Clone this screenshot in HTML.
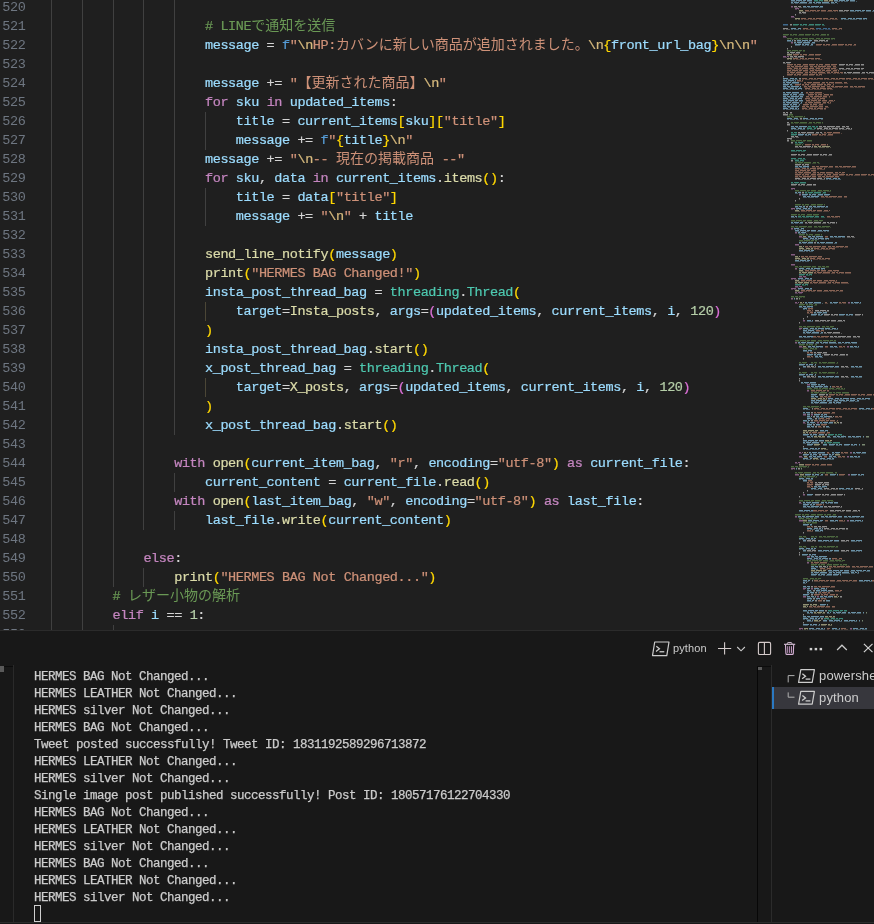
<!DOCTYPE html>
<html><head><meta charset="utf-8"><title>editor</title>
<style>
html,body{margin:0;padding:0}
body{width:874px;height:924px;overflow:hidden;background:#1f1f1f;position:relative;font-family:"Liberation Mono",monospace}
#ed{position:absolute;left:0;top:0;width:874px;height:630px;overflow:hidden;background:#1f1f1f}
.ln{position:absolute;left:0;width:25.4px;text-align:right;height:19px;line-height:19px;font-size:13.5px;letter-spacing:-0.4px;color:#6e7681;white-space:pre}
.cl{position:absolute;height:19px;line-height:19px;font-size:13.5px;letter-spacing:-0.4px;color:#d4d4d4;white-space:pre;-webkit-text-stroke:0.22px}
.ly{position:absolute;left:0;top:0;width:100%;height:100%;will-change:transform}
.g{position:absolute;width:1px;height:19px;background:#404040}.gw{background:#4b4636}
span.j{display:inline-block;vertical-align:baseline;font-family:"Liberation Mono","Noto Sans CJK JP",monospace;font-size:14px;letter-spacing:0;white-space:nowrap;overflow:visible;-webkit-text-stroke:0}
.v{color:#9cdcfe}.s{color:#ce9178}.e{color:#d7ba7d}.k{color:#c586c0}.b{color:#569cd6}.f{color:#dcdcaa}.t{color:#4ec9b0}.n{color:#b5cea8}.c{color:#6a9955}.p{color:#d4d4d4}.y{color:#ffd700}.m{color:#da70d6}.u{color:#179fff}
#pn{position:absolute;left:0;top:630px;width:874px;height:294px;background:#181818;overflow:hidden}
.tl{position:absolute;left:34px;height:17px;line-height:17px;font-size:12.5px;letter-spacing:-0.5px;color:#cccccc;white-space:pre;-webkit-text-stroke:0.25px}
.ui{font-family:"Liberation Sans",sans-serif;color:#cccccc;position:absolute;white-space:pre;will-change:transform}
</style></head><body>
<div id="ed">
<div class="ly">
<div class="ln" style="top:-2px">520</div>
<i class="g" style="left:51px;top:-2px"></i>
<i class="g" style="left:82px;top:-2px"></i>
<i class="g" style="left:113px;top:-2px"></i>
<i class="g" style="left:143px;top:-2px"></i>
<i class="g" style="left:174px;top:-2px"></i>
<div class="ln" style="top:17px">521</div>
<i class="g" style="left:51px;top:17px"></i>
<i class="g" style="left:82px;top:17px"></i>
<i class="g" style="left:113px;top:17px"></i>
<i class="g" style="left:143px;top:17px"></i>
<i class="g" style="left:174px;top:17px"></i>
<div class="cl" style="top:17px;left:205.00px"><span class="c"># LINE<span class="j" style="width:84px">で通知を送信</span></span></div>
<div class="ln" style="top:36px">522</div>
<i class="g" style="left:51px;top:36px"></i>
<i class="g" style="left:82px;top:36px"></i>
<i class="g" style="left:113px;top:36px"></i>
<i class="g" style="left:143px;top:36px"></i>
<i class="g" style="left:174px;top:36px"></i>
<div class="cl" style="top:36px;left:205.00px"><span class="v">message</span><span class="p"> = </span><span class="b">f</span><span class="s">"</span><span class="e">\n</span><span class="s">HP:<span class="j" style="width:252px">カバンに新しい商品が追加されました。</span></span><span class="e">\n</span><span class="y">{</span><span class="v">front_url_bag</span><span class="y">}</span><span class="e">\n\n</span><span class="s">"</span></div>
<div class="ln" style="top:55px">523</div>
<i class="g" style="left:51px;top:55px"></i>
<i class="g" style="left:82px;top:55px"></i>
<i class="g" style="left:113px;top:55px"></i>
<i class="g" style="left:143px;top:55px"></i>
<i class="g" style="left:174px;top:55px"></i>
<div class="ln" style="top:74px">524</div>
<i class="g" style="left:51px;top:74px"></i>
<i class="g" style="left:82px;top:74px"></i>
<i class="g" style="left:113px;top:74px"></i>
<i class="g" style="left:143px;top:74px"></i>
<i class="g" style="left:174px;top:74px"></i>
<div class="cl" style="top:74px;left:205.00px"><span class="v">message</span><span class="p"> += </span><span class="s">"<span class="j" style="width:126px">【更新された商品】</span></span><span class="e">\n</span><span class="s">"</span></div>
<div class="ln" style="top:93px">525</div>
<i class="g" style="left:51px;top:93px"></i>
<i class="g" style="left:82px;top:93px"></i>
<i class="g" style="left:113px;top:93px"></i>
<i class="g" style="left:143px;top:93px"></i>
<i class="g" style="left:174px;top:93px"></i>
<div class="cl" style="top:93px;left:205.00px"><span class="k">for</span><span class="p"> </span><span class="v">sku</span><span class="p"> </span><span class="k">in</span><span class="p"> </span><span class="v">updated_items</span><span class="p">:</span></div>
<div class="ln" style="top:112px">526</div>
<i class="g" style="left:51px;top:112px"></i>
<i class="g" style="left:82px;top:112px"></i>
<i class="g" style="left:113px;top:112px"></i>
<i class="g" style="left:143px;top:112px"></i>
<i class="g" style="left:174px;top:112px"></i>
<i class="g" style="left:205px;top:112px"></i>
<div class="cl" style="top:112px;left:235.80px"><span class="v">title</span><span class="p"> = </span><span class="v">current_items</span><span class="y">[</span><span class="v">sku</span><span class="y">][</span><span class="s">"title"</span><span class="y">]</span></div>
<div class="ln" style="top:131px">527</div>
<i class="g" style="left:51px;top:131px"></i>
<i class="g" style="left:82px;top:131px"></i>
<i class="g" style="left:113px;top:131px"></i>
<i class="g" style="left:143px;top:131px"></i>
<i class="g" style="left:174px;top:131px"></i>
<i class="g" style="left:205px;top:131px"></i>
<div class="cl" style="top:131px;left:235.80px"><span class="v">message</span><span class="p"> += </span><span class="b">f</span><span class="s">"</span><span class="y">{</span><span class="v">title</span><span class="y">}</span><span class="e">\n</span><span class="s">"</span></div>
<div class="ln" style="top:150px">528</div>
<i class="g" style="left:51px;top:150px"></i>
<i class="g" style="left:82px;top:150px"></i>
<i class="g" style="left:113px;top:150px"></i>
<i class="g" style="left:143px;top:150px"></i>
<i class="g" style="left:174px;top:150px"></i>
<div class="cl" style="top:150px;left:205.00px"><span class="v">message</span><span class="p"> += </span><span class="s">"</span><span class="e">\n</span><span class="s">-- <span class="j" style="width:98px">現在の掲載商品</span> --"</span></div>
<div class="ln" style="top:169px">529</div>
<i class="g" style="left:51px;top:169px"></i>
<i class="g" style="left:82px;top:169px"></i>
<i class="g" style="left:113px;top:169px"></i>
<i class="g" style="left:143px;top:169px"></i>
<i class="g" style="left:174px;top:169px"></i>
<div class="cl" style="top:169px;left:205.00px"><span class="k">for</span><span class="p"> </span><span class="v">sku</span><span class="p">, </span><span class="v">data</span><span class="p"> </span><span class="k">in</span><span class="p"> </span><span class="v">current_items</span><span class="p">.</span><span class="f">items</span><span class="y">()</span><span class="p">:</span></div>
<div class="ln" style="top:188px">530</div>
<i class="g" style="left:51px;top:188px"></i>
<i class="g" style="left:82px;top:188px"></i>
<i class="g" style="left:113px;top:188px"></i>
<i class="g" style="left:143px;top:188px"></i>
<i class="g" style="left:174px;top:188px"></i>
<i class="g" style="left:205px;top:188px"></i>
<div class="cl" style="top:188px;left:235.80px"><span class="v">title</span><span class="p"> = </span><span class="v">data</span><span class="y">[</span><span class="s">"title"</span><span class="y">]</span></div>
<div class="ln" style="top:207px">531</div>
<i class="g" style="left:51px;top:207px"></i>
<i class="g" style="left:82px;top:207px"></i>
<i class="g" style="left:113px;top:207px"></i>
<i class="g" style="left:143px;top:207px"></i>
<i class="g" style="left:174px;top:207px"></i>
<i class="g" style="left:205px;top:207px"></i>
<div class="cl" style="top:207px;left:235.80px"><span class="v">message</span><span class="p"> += </span><span class="s">"</span><span class="e">\n</span><span class="s">"</span><span class="p"> + </span><span class="v">title</span></div>
<div class="ln" style="top:226px">532</div>
<i class="g" style="left:51px;top:226px"></i>
<i class="g" style="left:82px;top:226px"></i>
<i class="g" style="left:113px;top:226px"></i>
<i class="g" style="left:143px;top:226px"></i>
<i class="g" style="left:174px;top:226px"></i>
<div class="ln" style="top:245px">533</div>
<i class="g" style="left:51px;top:245px"></i>
<i class="g" style="left:82px;top:245px"></i>
<i class="g" style="left:113px;top:245px"></i>
<i class="g" style="left:143px;top:245px"></i>
<i class="g" style="left:174px;top:245px"></i>
<div class="cl" style="top:245px;left:205.00px"><span class="f">send_line_notify</span><span class="y">(</span><span class="v">message</span><span class="y">)</span></div>
<div class="ln" style="top:264px">534</div>
<i class="g" style="left:51px;top:264px"></i>
<i class="g" style="left:82px;top:264px"></i>
<i class="g" style="left:113px;top:264px"></i>
<i class="g" style="left:143px;top:264px"></i>
<i class="g" style="left:174px;top:264px"></i>
<div class="cl" style="top:264px;left:205.00px"><span class="f">print</span><span class="y">(</span><span class="s">"HERMES BAG Changed!"</span><span class="y">)</span></div>
<div class="ln" style="top:283px">535</div>
<i class="g" style="left:51px;top:283px"></i>
<i class="g" style="left:82px;top:283px"></i>
<i class="g" style="left:113px;top:283px"></i>
<i class="g" style="left:143px;top:283px"></i>
<i class="g" style="left:174px;top:283px"></i>
<div class="cl" style="top:283px;left:205.00px"><span class="v">insta_post_thread_bag</span><span class="p"> = </span><span class="t">threading</span><span class="p">.</span><span class="t">Thread</span><span class="y">(</span></div>
<div class="ln" style="top:302px">536</div>
<i class="g" style="left:51px;top:302px"></i>
<i class="g" style="left:82px;top:302px"></i>
<i class="g" style="left:113px;top:302px"></i>
<i class="g" style="left:143px;top:302px"></i>
<i class="g" style="left:174px;top:302px"></i>
<i class="g gw" style="left:205px;top:302px"></i>
<div class="cl" style="top:302px;left:235.80px"><span class="v">target</span><span class="p">=</span><span class="f">Insta_posts</span><span class="p">, </span><span class="v">args</span><span class="p">=</span><span class="m">(</span><span class="v">updated_items</span><span class="p">, </span><span class="v">current_items</span><span class="p">, </span><span class="v">i</span><span class="p">, </span><span class="n">120</span><span class="m">)</span></div>
<div class="ln" style="top:321px">537</div>
<i class="g" style="left:51px;top:321px"></i>
<i class="g" style="left:82px;top:321px"></i>
<i class="g" style="left:113px;top:321px"></i>
<i class="g" style="left:143px;top:321px"></i>
<i class="g" style="left:174px;top:321px"></i>
<div class="cl" style="top:321px;left:205.00px"><span class="y">)</span></div>
<div class="ln" style="top:340px">538</div>
<i class="g" style="left:51px;top:340px"></i>
<i class="g" style="left:82px;top:340px"></i>
<i class="g" style="left:113px;top:340px"></i>
<i class="g" style="left:143px;top:340px"></i>
<i class="g" style="left:174px;top:340px"></i>
<div class="cl" style="top:340px;left:205.00px"><span class="v">insta_post_thread_bag</span><span class="p">.</span><span class="f">start</span><span class="y">()</span></div>
<div class="ln" style="top:359px">539</div>
<i class="g" style="left:51px;top:359px"></i>
<i class="g" style="left:82px;top:359px"></i>
<i class="g" style="left:113px;top:359px"></i>
<i class="g" style="left:143px;top:359px"></i>
<i class="g" style="left:174px;top:359px"></i>
<div class="cl" style="top:359px;left:205.00px"><span class="v">x_post_thread_bag</span><span class="p"> = </span><span class="t">threading</span><span class="p">.</span><span class="t">Thread</span><span class="y">(</span></div>
<div class="ln" style="top:378px">540</div>
<i class="g" style="left:51px;top:378px"></i>
<i class="g" style="left:82px;top:378px"></i>
<i class="g" style="left:113px;top:378px"></i>
<i class="g" style="left:143px;top:378px"></i>
<i class="g" style="left:174px;top:378px"></i>
<i class="g gw" style="left:205px;top:378px"></i>
<div class="cl" style="top:378px;left:235.80px"><span class="v">target</span><span class="p">=</span><span class="f">X_posts</span><span class="p">, </span><span class="v">args</span><span class="p">=</span><span class="m">(</span><span class="v">updated_items</span><span class="p">, </span><span class="v">current_items</span><span class="p">, </span><span class="v">i</span><span class="p">, </span><span class="n">120</span><span class="m">)</span></div>
<div class="ln" style="top:397px">541</div>
<i class="g" style="left:51px;top:397px"></i>
<i class="g" style="left:82px;top:397px"></i>
<i class="g" style="left:113px;top:397px"></i>
<i class="g" style="left:143px;top:397px"></i>
<i class="g" style="left:174px;top:397px"></i>
<div class="cl" style="top:397px;left:205.00px"><span class="y">)</span></div>
<div class="ln" style="top:416px">542</div>
<i class="g" style="left:51px;top:416px"></i>
<i class="g" style="left:82px;top:416px"></i>
<i class="g" style="left:113px;top:416px"></i>
<i class="g" style="left:143px;top:416px"></i>
<i class="g" style="left:174px;top:416px"></i>
<div class="cl" style="top:416px;left:205.00px"><span class="v">x_post_thread_bag</span><span class="p">.</span><span class="f">start</span><span class="y">()</span></div>
<div class="ln" style="top:435px">543</div>
<i class="g" style="left:51px;top:435px"></i>
<i class="g" style="left:82px;top:435px"></i>
<i class="g" style="left:113px;top:435px"></i>
<i class="g" style="left:143px;top:435px"></i>
<div class="ln" style="top:454px">544</div>
<i class="g" style="left:51px;top:454px"></i>
<i class="g" style="left:82px;top:454px"></i>
<i class="g" style="left:113px;top:454px"></i>
<i class="g" style="left:143px;top:454px"></i>
<div class="cl" style="top:454px;left:174.20px"><span class="k">with</span><span class="p"> </span><span class="f">open</span><span class="y">(</span><span class="v">current_item_bag</span><span class="p">, </span><span class="s">"r"</span><span class="p">, </span><span class="v">encoding</span><span class="p">=</span><span class="s">"utf-8"</span><span class="y">)</span><span class="p"> </span><span class="k">as</span><span class="p"> </span><span class="v">current_file</span><span class="p">:</span></div>
<div class="ln" style="top:473px">545</div>
<i class="g" style="left:51px;top:473px"></i>
<i class="g" style="left:82px;top:473px"></i>
<i class="g" style="left:113px;top:473px"></i>
<i class="g" style="left:143px;top:473px"></i>
<i class="g" style="left:174px;top:473px"></i>
<div class="cl" style="top:473px;left:205.00px"><span class="v">current_content</span><span class="p"> = </span><span class="v">current_file</span><span class="p">.</span><span class="f">read</span><span class="y">()</span></div>
<div class="ln" style="top:492px">546</div>
<i class="g" style="left:51px;top:492px"></i>
<i class="g" style="left:82px;top:492px"></i>
<i class="g" style="left:113px;top:492px"></i>
<i class="g" style="left:143px;top:492px"></i>
<div class="cl" style="top:492px;left:174.20px"><span class="k">with</span><span class="p"> </span><span class="f">open</span><span class="y">(</span><span class="v">last_item_bag</span><span class="p">, </span><span class="s">"w"</span><span class="p">, </span><span class="v">encoding</span><span class="p">=</span><span class="s">"utf-8"</span><span class="y">)</span><span class="p"> </span><span class="k">as</span><span class="p"> </span><span class="v">last_file</span><span class="p">:</span></div>
<div class="ln" style="top:511px">547</div>
<i class="g" style="left:51px;top:511px"></i>
<i class="g" style="left:82px;top:511px"></i>
<i class="g" style="left:113px;top:511px"></i>
<i class="g" style="left:143px;top:511px"></i>
<i class="g" style="left:174px;top:511px"></i>
<div class="cl" style="top:511px;left:205.00px"><span class="v">last_file</span><span class="p">.</span><span class="f">write</span><span class="y">(</span><span class="v">current_content</span><span class="y">)</span></div>
<div class="ln" style="top:530px">548</div>
<i class="g" style="left:51px;top:530px"></i>
<i class="g" style="left:82px;top:530px"></i>
<i class="g" style="left:113px;top:530px"></i>
<div class="ln" style="top:549px">549</div>
<i class="g" style="left:51px;top:549px"></i>
<i class="g" style="left:82px;top:549px"></i>
<i class="g" style="left:113px;top:549px"></i>
<div class="cl" style="top:549px;left:143.40px"><span class="k">else</span><span class="p">:</span></div>
<div class="ln" style="top:568px">550</div>
<i class="g" style="left:51px;top:568px"></i>
<i class="g" style="left:82px;top:568px"></i>
<i class="g" style="left:113px;top:568px"></i>
<i class="g" style="left:143px;top:568px"></i>
<div class="cl" style="top:568px;left:174.20px"><span class="f">print</span><span class="y">(</span><span class="s">"HERMES BAG Not Changed..."</span><span class="y">)</span></div>
<div class="ln" style="top:587px">551</div>
<i class="g" style="left:51px;top:587px"></i>
<i class="g" style="left:82px;top:587px"></i>
<div class="cl" style="top:587px;left:112.60px"><span class="c"># <span class="j" style="width:112px">レザー小物の解析</span></span></div>
<div class="ln" style="top:606px">552</div>
<i class="g" style="left:51px;top:606px"></i>
<i class="g" style="left:82px;top:606px"></i>
<div class="cl" style="top:606px;left:112.60px"><span class="k">elif</span><span class="p"> </span><span class="v">i</span><span class="p"> == </span><span class="n">1</span><span class="p">:</span></div>
<div class="ln" style="top:625px">553</div>
<i class="g" style="left:51px;top:625px"></i>
<i class="g" style="left:82px;top:625px"></i>
<i class="g" style="left:113px;top:625px"></i>
</div>
<svg style="position:absolute;left:0;top:0" width="874" height="630" viewBox="0 0 874 630" shape-rendering="crispEdges" fill="none" stroke-width="1"><path stroke="#406a8d" stroke-dasharray="2 1 5 1 7 2 3 1" d="M818 592.5h1"/><path stroke="#304456" stroke-dasharray="3 1 3 1 8 1 4 2" d="M818 593.5h1"/><path stroke="#406a8d" stroke-dasharray="6 1 2 1 4 2 5 1" d="M783 24.5h5"/><path stroke="#304456" stroke-dasharray="5 2 4 1 2 1 6 1" d="M783 25.5h5"/><path stroke="#406a8d" stroke-dasharray="5 2 4 1 2 1 6 1" d="M816 28.5h15M818 418.5h1"/><path stroke="#304456" stroke-dasharray="2 1 5 1 7 2 3 1" d="M816 29.5h15M818 419.5h1"/><path stroke="#4c683f" stroke-dasharray="4 1 6 1 3 1 5 2" d="M787 50.5h18M791 140.5h21M795 190.5h36M791 220.5h32M799 240.5h18M795 340.5h41M799 500.5h35M807 560.5h38"/><path stroke="#36442f" stroke-dasharray="6 1 2 1 4 2 5 1" d="M787 51.5h18M791 141.5h21M795 191.5h36M791 221.5h32M799 241.5h18M795 341.5h41M799 501.5h35M807 561.5h38"/><path stroke="#4c683f" stroke-dasharray="2 1 5 1 7 2 3 1" d="M791 122.5h32M795 162.5h25M799 362.5h8M811 362.5h6M819 362.5h19M799 372.5h8M811 372.5h6M819 372.5h19M811 392.5h38M795 472.5h42M803 522.5h14"/><path stroke="#36442f" stroke-dasharray="3 1 3 1 8 1 4 2" d="M791 123.5h32M795 163.5h25M799 363.5h8M811 363.5h6M819 363.5h19M799 373.5h8M811 373.5h6M819 373.5h19M811 393.5h38M795 473.5h42M803 523.5h14"/><path stroke="#4c683f" stroke-dasharray="6 1 2 1 4 2 5 1" d="M783 34.5h46M789 114.5h4M795 144.5h8M795 204.5h30M791 214.5h29M799 234.5h23M799 304.5h18M799 344.5h18M795 514.5h41M811 564.5h38"/><path stroke="#36442f" stroke-dasharray="5 2 4 1 2 1 6 1" d="M783 35.5h46M789 115.5h4M795 145.5h8M795 205.5h30M791 215.5h29M799 235.5h23M799 305.5h18M799 345.5h18M795 515.5h41M811 565.5h38"/><path stroke="#4c683f" stroke-dasharray="3 1 3 1 8 1 4 2" d="M787 116.5h18M791 226.5h40M795 266.5h34M791 296.5h14M799 326.5h35M803 406.5h18M791 466.5h18M799 476.5h18M799 536.5h8M811 536.5h6M819 536.5h19M799 546.5h8M811 546.5h6M819 546.5h19"/><path stroke="#36442f" stroke-dasharray="4 1 6 1 3 1 5 2" d="M787 117.5h18M791 227.5h40M795 267.5h34M791 297.5h14M799 327.5h35M803 407.5h18M791 467.5h18M799 477.5h18M799 537.5h8M811 537.5h6M819 537.5h19M799 547.5h8M811 547.5h6M819 547.5h19"/><path stroke="#4c683f" stroke-dasharray="5 2 4 1 2 1 6 1" d="M787 38.5h48M803 348.5h14M807 388.5h38M799 518.5h18M803 578.5h18"/><path stroke="#36442f" stroke-dasharray="2 1 5 1 7 2 3 1" d="M787 39.5h48M803 349.5h14M807 389.5h38M799 519.5h18M803 579.5h18"/><path stroke="#909072" stroke-dasharray="4 1 6 1 3 1 5 2" d="M824 0.5h9M799 10.5h5M795 210.5h5M799 270.5h5M795 280.5h5M795 290.5h5M803 430.5h16M825 440.5h7M803 520.5h4M811 570.5h16M814 620.5h7"/><path stroke="#585849" stroke-dasharray="6 1 2 1 4 2 5 1" d="M824 1.5h9M799 11.5h5M795 211.5h5M799 271.5h5M795 281.5h5M795 291.5h5M803 431.5h16M825 441.5h7M803 521.5h4M811 571.5h16M814 621.5h7"/><path stroke="#909072" stroke-dasharray="2 1 5 1 7 2 3 1" d="M799 272.5h14M795 282.5h14M800 302.5h4M834 422.5h5M803 432.5h5M804 452.5h4M814 612.5h11"/><path stroke="#585849" stroke-dasharray="3 1 3 1 8 1 4 2" d="M799 273.5h14M795 283.5h14M800 303.5h4M834 423.5h5M803 433.5h5M804 453.5h4M814 613.5h11"/><path stroke="#909072" stroke-dasharray="6 1 2 1 4 2 5 1" d="M787 54.5h5M814 444.5h7M835 454.5h5M799 464.5h5M800 474.5h4M803 604.5h16M821 624.5h11"/><path stroke="#585849" stroke-dasharray="5 2 4 1 2 1 6 1" d="M787 55.5h5M814 445.5h7M835 455.5h5M799 465.5h5M800 475.5h4M803 605.5h16M821 625.5h11"/><path stroke="#909072" stroke-dasharray="3 1 3 1 8 1 4 2" d="M814 146.5h17M803 236.5h4M799 246.5h5M795 256.5h5M803 346.5h4M814 436.5h11M804 456.5h4M834 596.5h5M803 606.5h5M825 616.5h10"/><path stroke="#585849" stroke-dasharray="4 1 6 1 3 1 5 2" d="M814 147.5h17M803 237.5h4M799 247.5h5M795 257.5h5M803 347.5h4M814 437.5h11M804 457.5h4M834 597.5h5M803 607.5h5M825 617.5h10"/><path stroke="#909072" stroke-dasharray="5 2 4 1 2 1 6 1" d="M795 18.5h5M787 58.5h5M799 248.5h14M795 258.5h14M811 398.5h16M821 448.5h7M813 458.5h6M804 628.5h4"/><path stroke="#585849" stroke-dasharray="2 1 5 1 7 2 3 1" d="M795 19.5h5M787 59.5h5M799 249.5h14M795 259.5h14M811 399.5h16M821 449.5h7M813 459.5h6M804 629.5h4"/><path stroke="#835d80" stroke-dasharray="4 1 6 1 3 1 5 2" d="M803 320.5h2M807 390.5h2M799 520.5h4M847 520.5h2"/><path stroke="#513e4f" stroke-dasharray="6 1 2 1 4 2 5 1" d="M803 321.5h2M807 391.5h2M799 521.5h4M847 521.5h2"/><path stroke="#835d80" stroke-dasharray="2 1 5 1 7 2 3 1" d="M791 42.5h2M795 232.5h2M795 292.5h8M795 302.5h4M848 302.5h2M795 342.5h2M803 422.5h3M817 422.5h2M799 452.5h4M850 452.5h2M795 462.5h5M799 502.5h3M807 562.5h2"/><path stroke="#513e4f" stroke-dasharray="3 1 3 1 8 1 4 2" d="M791 43.5h2M795 233.5h2M795 293.5h8M795 303.5h4M848 303.5h2M795 343.5h2M803 423.5h3M817 423.5h2M799 453.5h4M850 453.5h2M795 463.5h5M799 503.5h3M807 563.5h2"/><path stroke="#835d80" stroke-dasharray="6 1 2 1 4 2 5 1" d="M799 194.5h2M795 244.5h4M791 254.5h4M791 264.5h4M807 384.5h3M803 414.5h3M811 414.5h2M795 474.5h4M848 474.5h2M803 494.5h2"/><path stroke="#513e4f" stroke-dasharray="5 2 4 1 2 1 6 1" d="M799 195.5h2M795 245.5h4M791 255.5h4M791 265.5h4M807 385.5h3M803 415.5h3M811 415.5h2M795 475.5h4M848 475.5h2M803 495.5h2"/><path stroke="#835d80" stroke-dasharray="3 1 3 1 8 1 4 2" d="M791 6.5h2M791 16.5h4M783 36.5h4M783 56.5h6M799 236.5h4M799 276.5h8M795 286.5h8M799 346.5h4M847 346.5h2M799 456.5h4M847 456.5h2M795 516.5h2M807 556.5h3M803 596.5h3M817 596.5h2"/><path stroke="#513e4f" stroke-dasharray="4 1 6 1 3 1 5 2" d="M791 7.5h2M791 17.5h4M783 37.5h4M783 57.5h6M799 237.5h4M799 277.5h8M795 287.5h8M799 347.5h4M847 347.5h2M799 457.5h4M847 457.5h2M795 517.5h2M807 557.5h3M803 597.5h3M817 597.5h2"/><path stroke="#835d80" stroke-dasharray="5 2 4 1 2 1 6 1" d="M795 8.5h4M791 188.5h4M791 208.5h4M791 228.5h2M795 268.5h2M791 278.5h6M791 288.5h6M791 298.5h2M799 328.5h3M791 468.5h4M803 588.5h3M811 588.5h2M799 628.5h4M850 628.5h2"/><path stroke="#513e4f" stroke-dasharray="2 1 5 1 7 2 3 1" d="M795 9.5h4M791 189.5h4M791 209.5h4M791 229.5h2M795 269.5h2M791 279.5h6M791 289.5h6M791 299.5h2M799 329.5h3M791 469.5h4M803 589.5h3M811 589.5h2M799 629.5h4M850 629.5h2"/><path stroke="#798871" stroke-dasharray="4 1 6 1 3 1 5 2" d="M862 620.5h1"/><path stroke="#4c5448" stroke-dasharray="6 1 2 1 4 2 5 1" d="M862 621.5h1"/><path stroke="#798871" stroke-dasharray="2 1 5 1 7 2 3 1" d="M866 612.5h1"/><path stroke="#4c5448" stroke-dasharray="3 1 3 1 8 1 4 2" d="M866 613.5h1"/><path stroke="#798871" stroke-dasharray="6 1 2 1 4 2 5 1" d="M862 444.5h3"/><path stroke="#4c5448" stroke-dasharray="5 2 4 1 2 1 6 1" d="M862 445.5h3"/><path stroke="#798871" stroke-dasharray="3 1 3 1 8 1 4 2" d="M866 436.5h3"/><path stroke="#4c5448" stroke-dasharray="4 1 6 1 3 1 5 2" d="M866 437.5h3"/><path stroke="#798871" stroke-dasharray="5 2 4 1 2 1 6 1" d="M799 298.5h1M801 468.5h1"/><path stroke="#4c5448" stroke-dasharray="2 1 5 1 7 2 3 1" d="M799 299.5h1M801 469.5h1"/><path stroke="#886354" stroke-dasharray="4 1 6 1 3 1 5 2" d="M805 10.5h33M787 70.5h52M797 80.5h6M806 100.5h29M795 170.5h22M801 210.5h29M805 270.5h34M801 280.5h36M801 290.5h42M807 310.5h6M816 330.5h8M811 390.5h18M814 420.5h24M808 480.5h5M813 510.5h16M825 520.5h3M839 520.5h6M807 530.5h6M814 580.5h43M872 580.5h2M835 590.5h7M818 600.5h4"/><path stroke="#54413a" stroke-dasharray="6 1 2 1 4 2 5 1" d="M805 11.5h33M787 71.5h52M797 81.5h6M806 101.5h29M795 171.5h22M801 211.5h29M805 271.5h34M801 281.5h36M801 291.5h42M807 311.5h6M816 331.5h8M811 391.5h18M814 421.5h24M808 481.5h5M813 511.5h16M825 521.5h3M839 521.5h6M807 531.5h6M814 581.5h43M872 581.5h2M835 591.5h7M818 601.5h4"/><path stroke="#886354" stroke-dasharray="2 1 5 1 7 2 3 1" d="M787 72.5h56M804 82.5h44M806 92.5h18M805 102.5h26M824 132.5h18M795 172.5h50M814 272.5h37M810 282.5h39M825 302.5h3M839 302.5h7M807 312.5h6M807 352.5h6M814 412.5h21M809 432.5h21M827 452.5h3M841 452.5h7M807 482.5h6M811 562.5h18M819 592.5h11"/><path stroke="#54413a" stroke-dasharray="3 1 3 1 8 1 4 2" d="M787 73.5h56M804 83.5h44M806 93.5h18M805 103.5h26M824 133.5h18M795 173.5h50M814 273.5h37M810 283.5h39M825 303.5h3M839 303.5h7M807 313.5h6M807 353.5h6M814 413.5h21M809 433.5h21M827 453.5h3M841 453.5h7M807 483.5h6M811 563.5h18M819 593.5h11"/><path stroke="#886354" stroke-dasharray="6 1 2 1 4 2 5 1" d="M816 44.5h40M793 54.5h29M787 64.5h51M787 74.5h35M795 84.5h39M808 94.5h25M803 104.5h20M812 134.5h22M805 144.5h23M795 174.5h79M829 394.5h45M821 424.5h6M805 464.5h27M825 474.5h3M839 474.5h7M807 484.5h6M816 504.5h8M814 594.5h24"/><path stroke="#54413a" stroke-dasharray="5 2 4 1 2 1 6 1" d="M816 45.5h40M793 55.5h29M787 65.5h51M787 75.5h35M795 85.5h39M808 95.5h25M803 105.5h20M812 135.5h22M805 145.5h23M795 175.5h79M829 395.5h45M821 425.5h6M805 465.5h27M825 475.5h3M839 475.5h7M807 485.5h6M816 505.5h8M814 595.5h24"/><path stroke="#886354" stroke-dasharray="3 1 3 1 8 1 4 2" d="M787 66.5h50M804 86.5h61M806 96.5h24M802 106.5h27M812 166.5h44M795 176.5h45M821 196.5h26M827 216.5h13M825 236.5h3M805 246.5h43M801 256.5h22M813 336.5h16M825 346.5h3M839 346.5h6M807 356.5h6M832 386.5h10M820 396.5h11M835 416.5h7M818 426.5h4M824 456.5h3M838 456.5h7M807 486.5h6M807 526.5h6M829 566.5h45M814 586.5h21M809 606.5h26"/><path stroke="#54413a" stroke-dasharray="4 1 6 1 3 1 5 2" d="M787 67.5h50M804 87.5h61M806 97.5h24M802 107.5h27M812 167.5h44M795 177.5h45M821 197.5h26M827 217.5h13M825 237.5h3M805 247.5h43M801 257.5h22M813 337.5h16M825 347.5h3M839 347.5h6M807 357.5h6M832 387.5h10M820 397.5h11M835 417.5h7M818 427.5h4M824 457.5h3M838 457.5h7M807 487.5h6M807 527.5h6M829 567.5h45M814 587.5h21M809 607.5h26"/><path stroke="#886354" stroke-dasharray="5 2 4 1 2 1 6 1" d="M801 18.5h37M803 28.5h12M832 28.5h10M793 58.5h29M787 68.5h51M802 78.5h72M805 88.5h28M805 98.5h20M802 108.5h24M795 168.5h30M814 248.5h21M810 258.5h20M808 308.5h5M814 408.5h43M872 408.5h2M819 418.5h11M832 558.5h10M820 568.5h11M821 598.5h6M827 628.5h3M841 628.5h7"/><path stroke="#54413a" stroke-dasharray="2 1 5 1 7 2 3 1" d="M801 19.5h37M803 29.5h12M832 29.5h10M793 59.5h29M787 69.5h51M802 79.5h72M805 89.5h28M805 99.5h20M802 109.5h24M795 169.5h30M814 249.5h21M810 259.5h20M808 309.5h5M814 409.5h43M872 409.5h2M819 419.5h11M832 559.5h10M820 569.5h11M821 599.5h6M827 629.5h3M841 629.5h7"/><path stroke="#3b8576" stroke-dasharray="4 1 6 1 3 1 5 2" d="M814 0.5h9M791 150.5h15M795 160.5h9M828 610.5h19"/><path stroke="#2d524a" stroke-dasharray="6 1 2 1 4 2 5 1" d="M814 1.5h9M791 151.5h15M795 161.5h9M828 611.5h19"/><path stroke="#3b8576" stroke-dasharray="2 1 5 1 7 2 3 1" d="M791 132.5h6M795 142.5h9M791 182.5h15M805 192.5h22M824 442.5h16"/><path stroke="#2d524a" stroke-dasharray="3 1 3 1 8 1 4 2" d="M791 133.5h6M795 143.5h9M791 183.5h15M805 193.5h22M824 443.5h16"/><path stroke="#3b8576" stroke-dasharray="6 1 2 1 4 2 5 1" d="M793 24.5h32M791 134.5h6M799 274.5h13M795 284.5h13M828 434.5h16"/><path stroke="#2d524a" stroke-dasharray="5 2 4 1 2 1 6 1" d="M793 25.5h32M791 135.5h6M799 275.5h13M795 285.5h13M828 435.5h16"/><path stroke="#3b8576" stroke-dasharray="3 1 3 1 8 1 4 2" d="M808 126.5h10M798 216.5h27"/><path stroke="#2d524a" stroke-dasharray="4 1 6 1 3 1 5 2" d="M808 127.5h10M798 217.5h27"/><path stroke="#3b8576" stroke-dasharray="5 2 4 1 2 1 6 1" d="M807 128.5h9M791 158.5h15M824 618.5h19"/><path stroke="#2d524a" stroke-dasharray="2 1 5 1 7 2 3 1" d="M807 129.5h9M791 159.5h15M824 619.5h19"/><path stroke="#6a90a5" stroke-dasharray="4 1 6 1 3 1 5 2" d="M791 0.5h22M834 0.5h23M850 10.5h24M787 40.5h6M797 40.5h16M783 80.5h13M783 100.5h20M795 230.5h34M799 250.5h16M795 260.5h17M807 320.5h6M803 330.5h12M803 350.5h9M811 400.5h48M803 420.5h7M820 430.5h8M803 440.5h21M803 480.5h4M799 510.5h14M808 520.5h15M830 520.5h8M850 520.5h13M815 530.5h8M803 540.5h3M818 540.5h22M851 540.5h11M803 550.5h3M818 550.5h22M851 550.5h11M828 570.5h42M803 580.5h7M859 580.5h13M807 590.5h5M816 590.5h13M807 600.5h7M826 600.5h4M803 610.5h21M807 620.5h6M823 620.5h4M829 620.5h13M844 620.5h13M859 620.5h1"/><path stroke="#445862" stroke-dasharray="6 1 2 1 4 2 5 1" d="M791 1.5h22M834 1.5h23M850 11.5h24M787 41.5h6M797 41.5h16M783 81.5h13M783 101.5h20M795 231.5h34M799 251.5h16M795 261.5h17M807 321.5h6M803 331.5h12M803 351.5h9M811 401.5h48M803 421.5h7M820 431.5h8M803 441.5h21M803 481.5h4M799 511.5h14M808 521.5h15M830 521.5h8M850 521.5h13M815 531.5h8M803 541.5h3M818 541.5h22M851 541.5h11M803 551.5h3M818 551.5h22M851 551.5h11M828 571.5h42M803 581.5h7M859 581.5h13M807 591.5h5M816 591.5h13M807 601.5h7M826 601.5h4M803 611.5h21M807 621.5h6M823 621.5h4M829 621.5h13M844 621.5h13M859 621.5h1"/><path stroke="#6a90a5" stroke-dasharray="2 1 5 1 7 2 3 1" d="M791 2.5h47M794 42.5h21M783 82.5h18M783 92.5h20M783 102.5h19M795 192.5h6M791 222.5h12M798 232.5h9M799 242.5h14M817 242.5h20M805 302.5h18M830 302.5h8M851 302.5h10M814 312.5h13M803 332.5h20M798 342.5h59M801 382.5h15M811 402.5h30M803 412.5h7M807 422.5h9M820 422.5h13M803 442.5h17M809 452.5h16M832 452.5h8M853 452.5h13M803 502.5h35M811 572.5h48M803 582.5h4M807 592.5h7M807 612.5h6M827 612.5h4M833 612.5h13M848 612.5h13M863 612.5h1"/><path stroke="#445862" stroke-dasharray="3 1 3 1 8 1 4 2" d="M791 3.5h47M794 43.5h21M783 83.5h18M783 93.5h20M783 103.5h19M795 193.5h6M791 223.5h12M798 233.5h9M799 243.5h14M817 243.5h20M805 303.5h18M830 303.5h8M851 303.5h10M814 313.5h13M803 333.5h20M798 343.5h59M801 383.5h15M811 403.5h30M803 413.5h7M807 423.5h9M820 423.5h13M803 443.5h17M809 453.5h16M832 453.5h8M853 453.5h13M803 503.5h35M811 573.5h48M803 583.5h4M807 593.5h7M807 613.5h6M827 613.5h4M833 613.5h13M848 613.5h13M863 613.5h1"/><path stroke="#6a90a5" stroke-dasharray="6 1 2 1 4 2 5 1" d="M795 44.5h18M783 84.5h10M783 94.5h22M783 104.5h17M798 134.5h13M802 194.5h28M811 314.5h12M839 314.5h14M807 354.5h16M799 364.5h17M799 374.5h17M811 384.5h16M811 394.5h7M807 414.5h3M814 414.5h13M807 424.5h5M816 424.5h4M803 434.5h21M807 444.5h6M823 444.5h4M829 444.5h13M844 444.5h13M859 444.5h1M803 454.5h15M822 454.5h12M805 474.5h18M830 474.5h8M851 474.5h13M807 494.5h6M803 504.5h12M803 524.5h9M802 554.5h14M811 574.5h30M803 594.5h7M820 604.5h8M803 624.5h17"/><path stroke="#445862" stroke-dasharray="5 2 4 1 2 1 6 1" d="M795 45.5h18M783 85.5h10M783 95.5h22M783 105.5h17M798 135.5h13M802 195.5h28M811 315.5h12M839 315.5h14M807 355.5h16M799 365.5h17M799 375.5h17M811 385.5h16M811 395.5h7M807 415.5h3M814 415.5h13M807 425.5h5M816 425.5h4M803 435.5h21M807 445.5h6M823 445.5h4M829 445.5h13M844 445.5h13M859 445.5h1M803 455.5h15M822 455.5h12M805 475.5h18M830 475.5h8M851 475.5h13M807 495.5h6M803 505.5h12M803 525.5h9M802 555.5h14M811 575.5h30M803 595.5h7M820 605.5h8M803 625.5h17"/><path stroke="#6a90a5" stroke-dasharray="3 1 3 1 8 1 4 2" d="M803 6.5h20M783 86.5h18M783 96.5h20M783 106.5h16M791 126.5h17M795 166.5h14M803 196.5h16M795 206.5h10M809 206.5h19M791 216.5h6M808 236.5h15M830 236.5h15M799 306.5h14M799 336.5h14M808 346.5h15M830 346.5h8M850 346.5h9M815 356.5h8M803 366.5h3M818 366.5h22M851 366.5h11M803 376.5h3M818 376.5h22M851 376.5h11M807 386.5h24M811 396.5h7M807 416.5h5M816 416.5h13M807 426.5h7M826 426.5h4M807 436.5h6M827 436.5h4M833 436.5h13M848 436.5h13M863 436.5h1M809 456.5h13M829 456.5h8M850 456.5h10M814 486.5h13M803 506.5h20M798 516.5h66M811 556.5h16M811 566.5h7M803 586.5h7M807 596.5h9M820 596.5h13M803 616.5h21"/><path stroke="#445862" stroke-dasharray="4 1 6 1 3 1 5 2" d="M803 7.5h20M783 87.5h18M783 97.5h20M783 107.5h16M791 127.5h17M795 167.5h14M803 197.5h16M795 207.5h10M809 207.5h19M791 217.5h6M808 237.5h15M830 237.5h15M799 307.5h14M799 337.5h14M808 347.5h15M830 347.5h8M850 347.5h9M815 357.5h8M803 367.5h3M818 367.5h22M851 367.5h11M803 377.5h3M818 377.5h22M851 377.5h11M807 387.5h24M811 397.5h7M807 417.5h5M816 417.5h13M807 427.5h7M826 427.5h4M807 437.5h6M827 437.5h4M833 437.5h13M848 437.5h13M863 437.5h1M809 457.5h13M829 457.5h8M850 457.5h10M814 487.5h13M803 507.5h20M798 517.5h66M811 557.5h16M811 567.5h7M803 587.5h7M807 597.5h9M820 597.5h13M803 617.5h21"/><path stroke="#6a90a5" stroke-dasharray="5 2 4 1 2 1 6 1" d="M841 18.5h26M791 28.5h10M783 78.5h15M783 88.5h19M783 98.5h19M783 108.5h16M787 118.5h12M803 118.5h20M791 128.5h14M826 178.5h15M796 208.5h16M794 228.5h10M803 238.5h26M799 268.5h26M798 278.5h14M798 288.5h14M794 298.5h1M803 308.5h4M803 328.5h35M828 398.5h42M803 408.5h7M859 408.5h13M807 418.5h7M803 448.5h17M803 458.5h9M820 458.5h14M796 468.5h1M799 478.5h14M811 488.5h12M839 488.5h14M807 528.5h16M799 538.5h17M799 548.5h17M807 558.5h24M811 568.5h7M807 588.5h3M814 588.5h13M807 598.5h5M816 598.5h4M803 618.5h17M809 628.5h16M832 628.5h8M853 628.5h14"/><path stroke="#445862" stroke-dasharray="2 1 5 1 7 2 3 1" d="M841 19.5h26M791 29.5h10M783 79.5h15M783 89.5h19M783 99.5h19M783 109.5h16M787 119.5h12M803 119.5h20M791 129.5h14M826 179.5h15M796 209.5h16M794 229.5h10M803 239.5h26M799 269.5h26M798 279.5h14M798 289.5h14M794 299.5h1M803 309.5h4M803 329.5h35M828 399.5h42M803 409.5h7M859 409.5h13M807 419.5h7M803 449.5h17M803 459.5h9M820 459.5h14M796 469.5h1M799 479.5h14M811 489.5h12M839 489.5h14M807 529.5h16M799 539.5h17M799 549.5h17M807 559.5h24M811 569.5h7M807 589.5h3M814 589.5h13M807 599.5h5M816 599.5h4M803 619.5h17M809 629.5h16M832 629.5h8M853 629.5h14"/><path stroke="#8c8c8c" stroke-dasharray="4 1 6 1 3 1 5 2" d="M839 10.5h10M794 40.5h2M814 40.5h14M787 130.5h1M787 140.5h2M791 160.5h2M795 200.5h1M815 310.5h14M815 320.5h30M799 380.5h1M811 420.5h2M807 490.5h1M830 510.5h30M807 540.5h9M841 540.5h8M807 550.5h9M841 550.5h8M812 580.5h1M813 590.5h2M829 590.5h5M815 600.5h2M823 600.5h2M825 610.5h2"/><path stroke="#555555" stroke-dasharray="6 1 2 1 4 2 5 1" d="M839 11.5h10M794 41.5h2M814 41.5h14M787 131.5h1M787 141.5h2M791 161.5h2M795 201.5h1M815 311.5h14M815 321.5h30M799 381.5h1M811 421.5h2M807 491.5h1M830 511.5h30M807 541.5h9M841 541.5h8M807 551.5h9M841 551.5h8M812 581.5h1M813 591.5h2M829 591.5h5M815 601.5h2M823 601.5h2M825 611.5h2"/><path stroke="#8c8c8c" stroke-dasharray="2 1 5 1 7 2 3 1" d="M799 12.5h7M787 52.5h13M783 62.5h8M844 72.5h30M783 112.5h5M790 112.5h2M787 122.5h3M798 132.5h25M791 142.5h2M802 192.5h2M805 222.5h32M814 242.5h2M799 322.5h1M824 332.5h18M814 352.5h13M811 412.5h2M840 422.5h2M821 442.5h2M815 482.5h14M803 492.5h1M803 532.5h1M799 542.5h1M799 552.5h1M815 592.5h2M803 622.5h1"/><path stroke="#555555" stroke-dasharray="3 1 3 1 8 1 4 2" d="M799 13.5h7M787 53.5h13M783 63.5h8M844 73.5h30M783 113.5h5M790 113.5h2M787 123.5h3M798 133.5h25M791 143.5h2M802 193.5h2M805 223.5h32M814 243.5h2M799 323.5h1M824 333.5h18M814 353.5h13M811 413.5h2M840 423.5h2M821 443.5h2M815 483.5h14M803 493.5h1M803 533.5h1M799 543.5h1M799 553.5h1M815 593.5h2M803 623.5h1"/><path stroke="#8c8c8c" stroke-dasharray="6 1 2 1 4 2 5 1" d="M795 14.5h1M790 24.5h2M839 64.5h25M783 114.5h5M787 124.5h3M791 154.5h41M795 164.5h14M791 184.5h25M824 314.5h14M855 314.5h8M824 354.5h24M819 394.5h9M813 424.5h2M825 434.5h2M819 454.5h2M815 484.5h14M815 494.5h30M799 554.5h1M811 594.5h2M803 614.5h1"/><path stroke="#555555" stroke-dasharray="5 2 4 1 2 1 6 1" d="M795 15.5h1M790 25.5h2M839 65.5h25M783 115.5h5M787 125.5h3M791 155.5h41M795 165.5h14M791 185.5h25M824 315.5h14M855 315.5h8M824 355.5h24M819 395.5h9M813 425.5h2M825 435.5h2M819 455.5h2M815 485.5h14M815 495.5h30M799 555.5h1M811 595.5h2M803 615.5h1"/><path stroke="#8c8c8c" stroke-dasharray="3 1 3 1 8 1 4 2" d="M794 6.5h8M791 46.5h1M790 56.5h14M783 76.5h1M819 126.5h30M791 136.5h8M795 146.5h18M806 206.5h2M847 236.5h8M807 316.5h1M830 336.5h30M807 366.5h9M841 366.5h8M807 376.5h9M841 376.5h8M813 416.5h2M829 416.5h5M815 426.5h2M823 426.5h2M803 446.5h1M799 496.5h1M824 506.5h18M814 526.5h13M819 566.5h9M811 586.5h2M840 596.5h2"/><path stroke="#555555" stroke-dasharray="4 1 6 1 3 1 5 2" d="M794 7.5h8M791 47.5h1M790 57.5h14M783 77.5h1M819 127.5h30M791 137.5h8M795 147.5h18M806 207.5h2M847 237.5h8M807 317.5h1M830 337.5h30M807 367.5h9M841 367.5h8M807 377.5h9M841 377.5h8M813 417.5h2M829 417.5h5M815 427.5h2M823 427.5h2M803 447.5h1M799 497.5h1M824 507.5h18M814 527.5h13M819 567.5h9M811 587.5h2M840 597.5h2"/><path stroke="#8c8c8c" stroke-dasharray="5 2 4 1 2 1 6 1" d="M783 28.5h7M787 48.5h1M839 68.5h25M799 78.5h2M800 118.5h2M817 128.5h35M787 138.5h5M795 178.5h30M799 198.5h1M796 298.5h2M803 318.5h1M803 358.5h1M799 368.5h1M799 378.5h1M812 408.5h1M815 418.5h2M803 438.5h1M798 468.5h2M824 488.5h14M855 488.5h8M824 528.5h24M813 598.5h2M821 618.5h2"/><path stroke="#555555" stroke-dasharray="2 1 5 1 7 2 3 1" d="M783 29.5h7M787 49.5h1M839 69.5h25M799 79.5h2M800 119.5h2M817 129.5h35M787 139.5h5M795 179.5h30M799 199.5h1M796 299.5h2M803 319.5h1M803 359.5h1M799 369.5h1M799 379.5h1M812 409.5h1M815 419.5h2M803 439.5h1M798 469.5h2M824 489.5h14M855 489.5h8M824 529.5h24M813 599.5h2M821 619.5h2"/></svg>
</div>

<div id="pn">
<i style="position:absolute;left:0;top:0;width:874px;height:1px;background:#2b2b2b"></i>
<div class="ly">
<div class="tl" style="top:39.3px">HERMES BAG Not Changed...</div>
<div class="tl" style="top:56.3px">HERMES LEATHER Not Changed...</div>
<div class="tl" style="top:73.3px">HERMES silver Not Changed...</div>
<div class="tl" style="top:90.3px">HERMES BAG Not Changed...</div>
<div class="tl" style="top:107.3px">Tweet posted successfully! Tweet ID: 1831192589296713872</div>
<div class="tl" style="top:124.3px">HERMES LEATHER Not Changed...</div>
<div class="tl" style="top:141.3px">HERMES silver Not Changed...</div>
<div class="tl" style="top:158.3px">Single image post published successfully! Post ID: 18057176122704330</div>
<div class="tl" style="top:175.3px">HERMES BAG Not Changed...</div>
<div class="tl" style="top:192.3px">HERMES LEATHER Not Changed...</div>
<div class="tl" style="top:209.3px">HERMES silver Not Changed...</div>
<div class="tl" style="top:226.3px">HERMES BAG Not Changed...</div>
<div class="tl" style="top:243.3px">HERMES LEATHER Not Changed...</div>
<div class="tl" style="top:260.3px">HERMES silver Not Changed...</div>
</div>
<i style="position:absolute;left:34px;top:275px;width:5px;height:15px;border:1px solid #cfcfcf"></i>
<!-- left edge artifacts -->
<i style="position:absolute;left:0;top:36px;width:4px;height:6px;background:#5a5a5a"></i>
<i style="position:absolute;left:4px;top:36px;width:9px;height:1px;background:#0c0c0c"></i>
<i style="position:absolute;left:13px;top:35px;width:1px;height:258px;background:#2a2a2a"></i>
<!-- terminal scrollbar / divider -->
<i style="position:absolute;left:757px;top:36px;width:1.3px;height:257px;background:#070707"></i>
<i style="position:absolute;left:757px;top:36px;width:14px;height:1px;background:#0c0c0c"></i>
<i style="position:absolute;left:758px;top:37px;width:4px;height:3px;background:#5a5a5a"></i>
<i style="position:absolute;left:771px;top:35px;width:1px;height:258px;background:#2b2b2b"></i>
<!-- tabs list -->
<i style="position:absolute;left:772px;top:57px;width:102px;height:22px;background:#37373d"></i>
<i style="position:absolute;left:772px;top:57px;width:1.5px;height:22px;background:#2b79c2"></i>
<div class="ui" style="left:818.5px;top:36.5px;font-size:13px;line-height:18px;letter-spacing:0.15px">powershell</div>
<div class="ui" style="left:818.5px;top:58.5px;font-size:13px;line-height:18px;letter-spacing:0.15px">python</div>
<div class="ui" style="left:672.7px;top:8.5px;font-size:11px;line-height:18px;letter-spacing:0.1px">python</div>
<svg style="position:absolute;left:0;top:0" width="874" height="294" viewBox="0 630 874 294"><path d="M654.70 642.00 L669.00 642.00 L666.80 655.60 L652.50 655.60 Z" fill="none" stroke="#cccccc" stroke-width="1.20" stroke-linejoin="round"/><path d="M656.30 646.35 L659.40 648.85 L656.00 651.45" fill="none" stroke="#cccccc" stroke-width="1.3"/><path d="M659.50 651.75 H664.30" stroke="#cccccc" stroke-width="1.3"/><path d="M724.6 642.3V654.6M718 648.45H731.2" stroke="#d4cccc" stroke-width="1.1" fill="none"/><path d="M737.2 647L741.05 650.8L744.9 647" stroke="#cccccc" stroke-width="1.1" fill="none"/><rect x="758.4" y="642.4" width="12.2" height="12.1" rx="1.3" fill="none" stroke="#d6cccc" stroke-width="1.1"/><path d="M764.4 642.4V654.5" stroke="#d6cccc" stroke-width="1.1"/><path d="M784 644.3H795.2" stroke="#d8c4d8" stroke-width="1.1"/><path d="M787.3 644.2V643.4Q787.3 642.6 788.1 642.6H791.1Q791.9 642.6 791.9 643.4V644.2" stroke="#d8c4d8" stroke-width="1" fill="none"/><path d="M785.5 644.6L785.9 653.4Q785.95 654.4 786.9 654.4H792.3Q793.25 654.4 793.3 653.4L793.7 644.6" stroke="#d8b4d8" stroke-width="1.1" fill="none"/><path d="M787.7 646.2V652.9M789.6 646.2V652.9M791.5 646.2V652.9" stroke="#d0a0d0" stroke-width="0.9"/><rect x="809.70" y="647.9" width="2.5" height="2.4" fill="#d0d0d0"/><rect x="814.65" y="647.9" width="2.5" height="2.4" fill="#d0d0d0"/><rect x="819.60" y="647.9" width="2.5" height="2.4" fill="#d0d0d0"/><path d="M837.1 650L841.95 645.2L846.8 650" stroke="#cccccc" stroke-width="1.2" fill="none"/><path d="M863.9 643.9L872.5 652.1M872.5 643.9L863.9 652.1" stroke="#d4d4d4" stroke-width="1.2" fill="none"/><path d="M788.2 682.4V675.6H794.5" stroke="#b0b0b0" stroke-width="1" fill="none"/><path d="M788.2 692.4V697.2H794.5" stroke="#b0b0b0" stroke-width="1" fill="none"/><path d="M800.80 669.60 L814.40 669.60 L812.20 682.40 L798.60 682.40 Z" fill="none" stroke="#cccccc" stroke-width="1.20" stroke-linejoin="round"/><path d="M802.40 673.70 L805.50 676.20 L802.10 678.80" fill="none" stroke="#cccccc" stroke-width="1.3"/><path d="M805.60 679.10 H810.40" stroke="#cccccc" stroke-width="1.3"/><path d="M800.80 691.40 L814.40 691.40 L812.20 704.20 L798.60 704.20 Z" fill="none" stroke="#cccccc" stroke-width="1.20" stroke-linejoin="round"/><path d="M802.40 695.50 L805.50 698.00 L802.10 700.60" fill="none" stroke="#cccccc" stroke-width="1.3"/><path d="M805.60 700.90 H810.40" stroke="#cccccc" stroke-width="1.3"/></svg>
<!-- bottom border -->
<i style="position:absolute;left:0;top:292px;width:874px;height:1px;background:#2b2b2b"></i>
</div>

</body></html>
